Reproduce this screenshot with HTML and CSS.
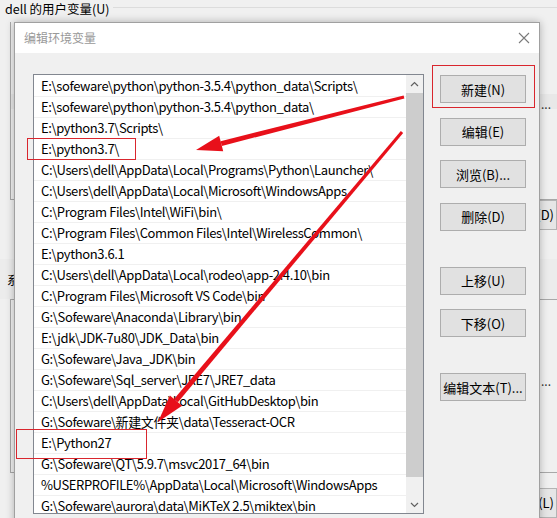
FILE: index.html
```html
<!DOCTYPE html>
<html lang="zh">
<head>
<meta charset="utf-8">
<title>编辑环境变量</title>
<link rel="stylesheet" href="styles.css">
</head>
<body>
<div class="desk">
  <div class="bg-head"><span class="bg-label">dell 的用户变量(U)</span><span class="bg-rule"></span></div>
  <div class="bg-ulist">
    <div class="bg-a"></div>
    <div class="bg-b"><span class="bg-dots">...</span></div>
    <div class="bg-c"></div>
  </div>
  <div class="bg-btnrow"><span class="bg-btn">删除(D)</span></div>
  <div class="bg-e"></div>
  <div class="bg-f"><span class="bg-label2">系统变量(S)</span></div>
  <div class="bg-slist">
    <div class="bg-g"></div>
    <div class="bg-h"><span class="bg-dots">...</span></div>
  </div>
  <div class="bg-i"></div>
  <div class="bg-btnrow2"><span class="bg-btn">删除(L)</span></div>
</div>

<div class="dialog">
  <div class="titlebar">
    <span class="title">编辑环境变量</span>
    <svg class="close" width="12" height="12" viewBox="0 0 12 12"><path d="M1 1L11 11M11 1L1 11" stroke="#7a7a7a" stroke-width="1.1" fill="none"/></svg>
  </div>
  <div class="body">
    <div class="listbox">
      <div class="rows">
        <div class="row">E:\sofeware\python\python-3.5.4\python_data\Scripts\</div>
        <div class="row">E:\sofeware\python\python-3.5.4\python_data\</div>
        <div class="row">E:\python3.7\Scripts\</div>
        <div class="row">E:\python3.7\</div>
        <div class="row">C:\Users\dell\AppData\Local\Programs\Python\Launcher\</div>
        <div class="row">C:\Users\dell\AppData\Local\Microsoft\WindowsApps</div>
        <div class="row">C:\Program Files\Intel\WiFi\bin\</div>
        <div class="row">C:\Program Files\Common Files\Intel\WirelessCommon\</div>
        <div class="row">E:\python3.6.1</div>
        <div class="row">C:\Users\dell\AppData\Local\rodeo\app-2.4.10\bin</div>
        <div class="row">C:\Program Files\Microsoft VS Code\bin</div>
        <div class="row">G:\Sofeware\Anaconda\Library\bin</div>
        <div class="row">E:\jdk\JDK-7u80\JDK_Data\bin</div>
        <div class="row">G:\Sofeware\Java_JDK\bin</div>
        <div class="row">G:\Sofeware\Sql_server\JRE7\JRE7_data</div>
        <div class="row">C:\Users\dell\AppData\Local\GitHubDesktop\bin</div>
        <div class="row">G:\Sofeware\新建文件夹\data\Tesseract-OCR</div>
        <div class="row">E:\Python27</div>
        <div class="row">G:\Sofeware\QT\5.9.7\msvc2017_64\bin</div>
        <div class="row">%USERPROFILE%\AppData\Local\Microsoft\WindowsApps</div>
        <div class="row">G:\Sofeware\aurora\data\MiKTeX 2.5\miktex\bin</div>
      </div>
      <div class="scrollbar">
        <div class="sb-btn"><svg width="9" height="6" viewBox="0 0 9 6"><path d="M1 5L4.5 1.5L8 5" stroke="#606060" stroke-width="1.2" fill="none"/></svg></div>
        <div class="sb-track"><div class="sb-thumb"></div></div>
        <div class="sb-btn"><svg width="9" height="6" viewBox="0 0 9 6"><path d="M1 1L4.5 4.5L8 1" stroke="#606060" stroke-width="1.2" fill="none"/></svg></div>
      </div>
    </div>
    <div class="buttons">
      <div class="btn">新建(N)</div>
      <div class="btn">编辑(E)</div>
      <div class="btn">浏览(B)...</div>
      <div class="btn">删除(D)</div>
      <div class="btn gap-lg">上移(U)</div>
      <div class="btn">下移(O)</div>
      <div class="btn gap-lg">编辑文本(T)...</div>
    </div>
  </div>
</div>

<svg class="marks" width="557" height="518" viewBox="0 0 557 518">
  <rect x="27.5" y="138.5" width="108" height="21" fill="none" stroke="#d9262e" stroke-width="1"/>
  <rect x="16.5" y="429.5" width="130" height="29" fill="none" stroke="#d9262e" stroke-width="1"/>
  <rect x="432.5" y="65.5" width="102" height="42" fill="none" stroke="#d9262e" stroke-width="1"/>
  <polygon points="403.63,95.55 220.58,141.18 221.82,146.02 404.37,98.45" fill="#e8101a"/>
  <polygon points="196,150 219.2,135.8 223.2,151.3" fill="#e8101a"/>
  <polygon points="400.85,131.03 174.09,398.99 177.91,402.21 403.15,132.97" fill="#e8101a"/>
  <polygon points="158,422 169.9,395.4 182.1,405.8" fill="#e8101a"/>
</svg>
</body>
</html>
```
FILE: styles.css
```css
* { box-sizing: border-box; }
html, body { margin: 0; padding: 0; width: 557px; height: 518px; overflow: hidden; }
body {
  position: relative;
  background: #f0f0f0;
  font-family: "Noto Sans CJK SC", "Noto Sans", sans-serif;
  color: #000;
}

/* background window */
.desk { display: flex; flex-direction: column; height: 518px; }
.bg-head { height: 22px; display: flex; align-items: flex-start; }
.bg-label { font-size: 12.5px; line-height: 16px; padding-left: 5px; margin-top: 1px; white-space: nowrap; }
.bg-rule { flex: 1; height: 1px; background: #dcdcdc; margin-top: 7px; margin-left: 3px; }
.bg-ulist { height: 179px; margin-left: 10px; border-left: 1px solid #a8a8a8; border-bottom: 1px solid #a8a8a8; display: flex; flex-direction: column; }
.bg-a { height: 72px; }
.bg-b { height: 15px; background: #e8e8e8; display: flex; justify-content: flex-end; align-items: flex-end; }
.bg-c { flex: 1; }
.bg-dots { font-size: 12px; line-height: 10px; width: 16px; color: #333; }
.bg-btnrow { height: 30px; display: flex; justify-content: flex-end; }
.bg-btn { font-size: 13px; line-height: 28px; border: 1px solid #b4b4b4; background: #e6e6e6; padding: 0 2px 0 20px; }
.bg-e { height: 30px; }
.bg-f { height: 40px; display: flex; align-items: center; background: #ececec; }
.bg-label2 { font-size: 12px; padding-left: 7px; }
.bg-slist { height: 175px; margin-left: 10px; border-left: 1px solid #a8a8a8; border-top: 1px solid #a8a8a8; border-bottom: 1px solid #a8a8a8; display: flex; flex-direction: column; }
.bg-g { height: 34px; }
.bg-h { flex: 1; display: flex; justify-content: flex-end; padding-top: 42px; }
.bg-i { height: 15px; }
.bg-btnrow2 { flex: 1; display: flex; justify-content: flex-end; }

/* dialog */
.dialog {
  position: absolute;
  left: 14px;
  top: 22px;
  width: 526px;
  height: 520px;
  border: 1px solid #a0a0a0;
  background: #f0f0f0;
  box-shadow: 0 0 8px rgba(0, 0, 0, 0.28);
}
.titlebar {
  height: 30px;
  background: #fff;
  display: flex;
  align-items: center;
  justify-content: space-between;
  padding: 0 9px 0 9px;
}
.title { font-size: 12px; color: #999; margin-top: -1px; }
.close { display: block; }

.body { display: flex; gap: 16px; padding: 21px 13px 0 18px; }

.listbox {
  width: 391px;
  height: 440px;
  border: 1px solid #828790;
  background: #fff;
  display: flex;
}
.rows { flex: 1; overflow: hidden; padding-top: 1px; }
.row {
  height: 21px;
  border-bottom: 1px solid #f0f0f0;
  font-size: 13px;
  line-height: 20px;
  letter-spacing: -0.38px;
  padding-left: 7px;
  white-space: nowrap;
}

.scrollbar { width: 17px; background: #f0f0f0; display: flex; flex-direction: column; }
.sb-btn { height: 17px; display: flex; align-items: center; justify-content: center; }
.sb-track { flex: 1; padding-top: 1px; }
.sb-thumb { height: 384px; background: #cdcdcd; }

.buttons { width: 86px; display: flex; flex-direction: column; padding-top: 1px; }
.btn {
  height: 28px;
  border: 1px solid #adadad;
  background: #e1e1e1;
  font-size: 13px;
  display: flex;
  align-items: center;
  justify-content: center;
  white-space: nowrap;
}
.btn + .btn { margin-top: 14.5px; }
.btn.gap-lg { margin-top: 36px; }

.marks { position: absolute; left: 0; top: 0; pointer-events: none; }
```
